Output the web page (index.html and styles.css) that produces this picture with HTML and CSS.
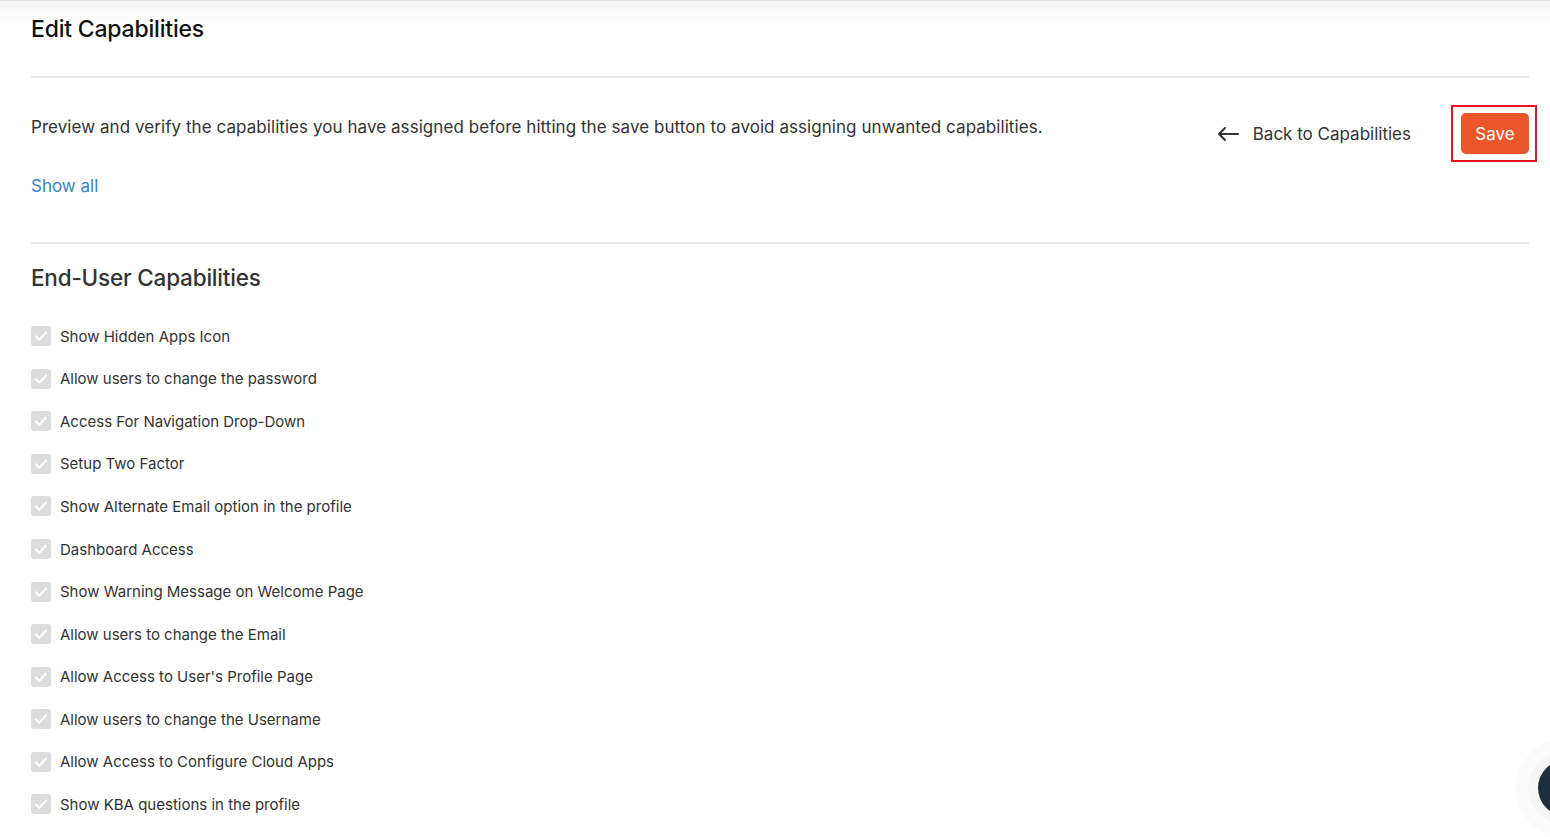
FILE: index.html
```html
<!DOCTYPE html>
<html lang="en">
<head>
<meta charset="utf-8">
<title>Edit Capabilities</title>
<link rel="stylesheet" href="styles.css">
</head>
<body>
<div class="topshade"></div>
<main class="page">
  <h1 class="title">Edit Capabilities</h1>
  <hr class="divider">
  <section class="intro">
    <div class="intro-text">
      <p class="desc">Preview and verify the capabilities you have assigned before hitting the save button to avoid assigning unwanted capabilities.</p>
      <a class="show-all" href="#">Show all</a>
    </div>
    <div class="actions">
      <a class="back" href="#">
        <svg class="back-icon" width="22" height="16" viewBox="0 0 22 16" fill="none" stroke="#333" stroke-width="2" stroke-linecap="round" stroke-linejoin="round"><path d="M21 8H2M8 2L2 8l6 6"/></svg>
        <span>Back to Capabilities</span>
      </a>
      <div class="save-frame"><button class="save">Save</button></div>
    </div>
  </section>
  <hr class="divider">
  <h2 class="section-title">End-User Capabilities</h2>
  <ul class="caps">
    <li><span class="cb"><svg viewBox="0 0 20 20" width="20" height="20"><path d="M5 10.5l3.3 3.3L15 6.5" fill="none" stroke="#fff" stroke-width="2.2" stroke-linecap="round" stroke-linejoin="round"/></svg></span>Show Hidden Apps Icon</li>
    <li><span class="cb"><svg viewBox="0 0 20 20" width="20" height="20"><path d="M5 10.5l3.3 3.3L15 6.5" fill="none" stroke="#fff" stroke-width="2.2" stroke-linecap="round" stroke-linejoin="round"/></svg></span>Allow users to change the password</li>
    <li><span class="cb"><svg viewBox="0 0 20 20" width="20" height="20"><path d="M5 10.5l3.3 3.3L15 6.5" fill="none" stroke="#fff" stroke-width="2.2" stroke-linecap="round" stroke-linejoin="round"/></svg></span>Access For Navigation Drop-Down</li>
    <li><span class="cb"><svg viewBox="0 0 20 20" width="20" height="20"><path d="M5 10.5l3.3 3.3L15 6.5" fill="none" stroke="#fff" stroke-width="2.2" stroke-linecap="round" stroke-linejoin="round"/></svg></span>Setup Two Factor</li>
    <li><span class="cb"><svg viewBox="0 0 20 20" width="20" height="20"><path d="M5 10.5l3.3 3.3L15 6.5" fill="none" stroke="#fff" stroke-width="2.2" stroke-linecap="round" stroke-linejoin="round"/></svg></span>Show Alternate Email option in the profile</li>
    <li><span class="cb"><svg viewBox="0 0 20 20" width="20" height="20"><path d="M5 10.5l3.3 3.3L15 6.5" fill="none" stroke="#fff" stroke-width="2.2" stroke-linecap="round" stroke-linejoin="round"/></svg></span>Dashboard Access</li>
    <li><span class="cb"><svg viewBox="0 0 20 20" width="20" height="20"><path d="M5 10.5l3.3 3.3L15 6.5" fill="none" stroke="#fff" stroke-width="2.2" stroke-linecap="round" stroke-linejoin="round"/></svg></span>Show Warning Message on Welcome Page</li>
    <li><span class="cb"><svg viewBox="0 0 20 20" width="20" height="20"><path d="M5 10.5l3.3 3.3L15 6.5" fill="none" stroke="#fff" stroke-width="2.2" stroke-linecap="round" stroke-linejoin="round"/></svg></span>Allow users to change the Email</li>
    <li><span class="cb"><svg viewBox="0 0 20 20" width="20" height="20"><path d="M5 10.5l3.3 3.3L15 6.5" fill="none" stroke="#fff" stroke-width="2.2" stroke-linecap="round" stroke-linejoin="round"/></svg></span>Allow Access to User's Profile Page</li>
    <li><span class="cb"><svg viewBox="0 0 20 20" width="20" height="20"><path d="M5 10.5l3.3 3.3L15 6.5" fill="none" stroke="#fff" stroke-width="2.2" stroke-linecap="round" stroke-linejoin="round"/></svg></span>Allow users to change the Username</li>
    <li><span class="cb"><svg viewBox="0 0 20 20" width="20" height="20"><path d="M5 10.5l3.3 3.3L15 6.5" fill="none" stroke="#fff" stroke-width="2.2" stroke-linecap="round" stroke-linejoin="round"/></svg></span>Allow Access to Configure Cloud Apps</li>
    <li><span class="cb"><svg viewBox="0 0 20 20" width="20" height="20"><path d="M5 10.5l3.3 3.3L15 6.5" fill="none" stroke="#fff" stroke-width="2.2" stroke-linecap="round" stroke-linejoin="round"/></svg></span>Show KBA questions in the profile</li>
  </ul>
</main>
<div class="fab"></div>
</body>
</html>
```
FILE: styles.css
```css
html, body {
  margin: 0;
  padding: 0;
  background: #fff;
  overflow: hidden;
}
body {
  font-family: Inter, "Open Sans", sans-serif;
  color: #333;
  height: 837px;
  position: relative;
}
.topshade {
  position: absolute;
  top: 0;
  left: 0;
  right: 0;
  height: 22px;
  border-top: 1px solid #dedede;
  background: linear-gradient(#f3f3f3, #ffffff);
  pointer-events: none;
}
.page {
  position: relative;
  padding: 0 21px 0 31px;
}
.title {
  margin: 0;
  padding-top: 15px;
  height: 61px;
  font-size: 23px;
  font-weight: 500;
  color: #111;
  line-height: 28px;
  letter-spacing: -0.2px;
}
.divider {
  margin: 0;
  border: 0;
  height: 2px;
  background: #e8e8e8;
}
.intro {
  display: flex;
  justify-content: space-between;
  align-items: flex-start;
  height: 164px;
}
.desc {
  margin: 37px 0 0;
  font-size: 17px;
  line-height: 24px;
  color: #333;
  letter-spacing: 0.06px;
}
.show-all {
  display: inline-block;
  margin-top: 35px;
  font-size: 17px;
  line-height: 24px;
  color: #3c7fc2;
  text-decoration: none;
}
.actions {
  display: flex;
  align-items: center;
  margin-top: 27px;
  margin-right: -8px;
}
.back {
  display: flex;
  align-items: center;
  gap: 14px;
  color: #333;
  text-decoration: none;
  font-size: 17px;
  margin-right: 40px;
}
.save-frame {
  border: 2px solid #e8141c;
  padding: 6px 6px 6px 8px;
}
.save {
  display: block;
  width: 68px;
  height: 41px;
  border: 0;
  border-radius: 5px;
  background: #ec562b;
  color: #fff;
  font-family: inherit;
  font-size: 17px;
}
.section-title {
  margin: 0;
  padding-top: 20px;
  font-size: 22.5px;
  font-weight: 500;
  line-height: 28px;
  color: #333;
  letter-spacing: -0.2px;
}
.caps {
  list-style: none;
  margin: 23px 0 0;
  padding: 0;
}
.caps li {
  display: flex;
  align-items: center;
  gap: 9px;
  height: 42.55px;
  font-size: 15px;
  color: #333;
}
.cb {
  display: block;
  width: 20px;
  height: 20px;
  border-radius: 3px;
  background: #dcdcdc;
}
.cb svg { display: block; }
.fab {
  position: absolute;
  left: 1538px;
  top: 760px;
  width: 56px;
  height: 56px;
  border-radius: 50%;
  background: #1f2d3e;
  box-shadow: 0 0 0 10px rgba(0,0,0,0.02), 0 0 0 22px rgba(0,0,0,0.015);
}
```
